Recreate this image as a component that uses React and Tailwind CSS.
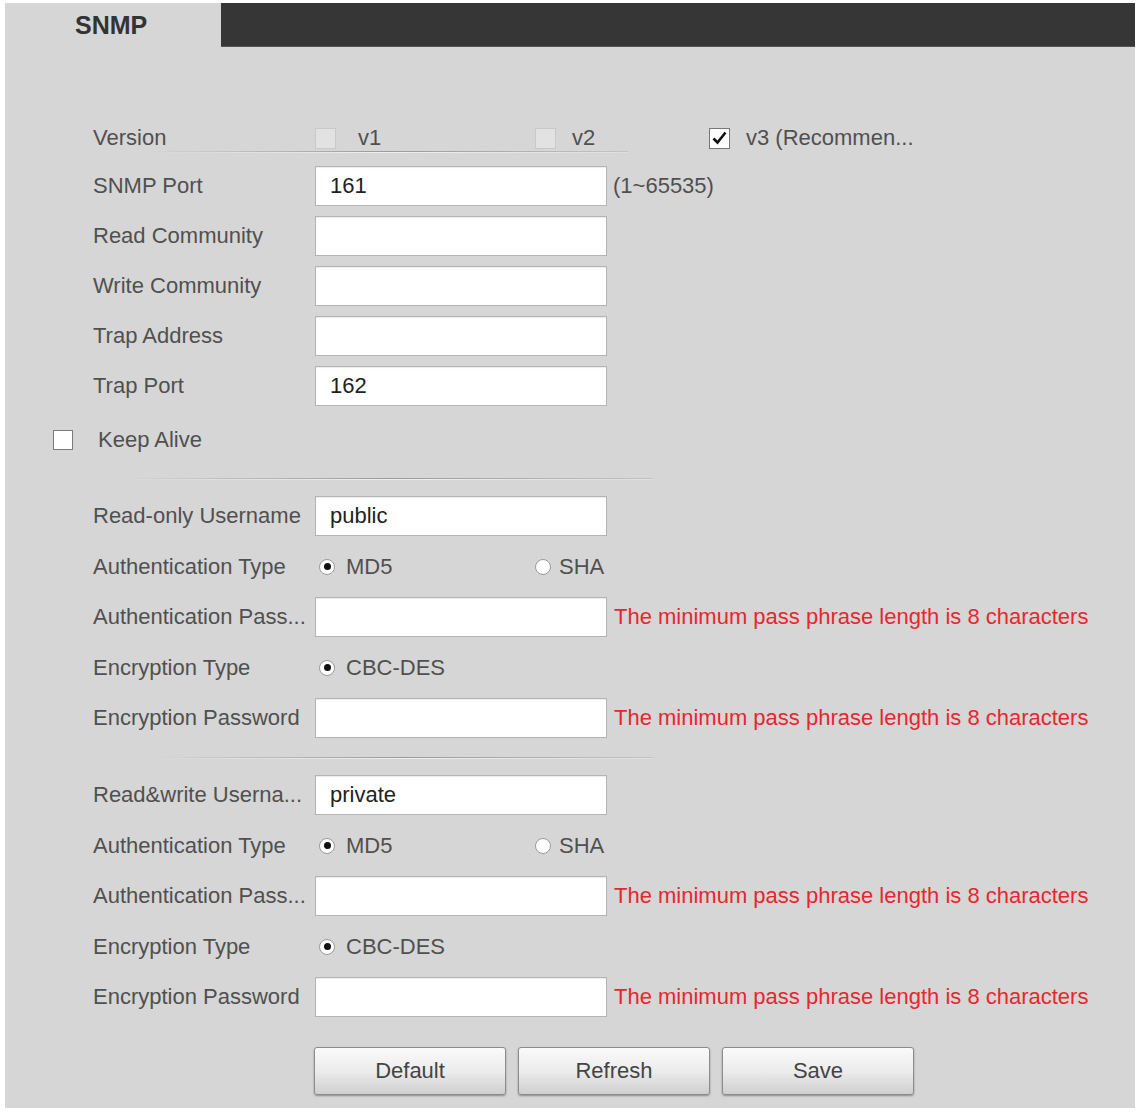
import React from "react";

const FONT = { fontFamily: '"Liberation Sans", Arial, sans-serif' };

function Sep({ ml = 40, w = 520 }) {
  return (
    <div className="flex flex-col" style={{ marginLeft: ml, width: w }}>
      <div className="h-px bg-gradient-to-r from-transparent via-[#9a9a9a] to-[#c4c4c4]" />
      <div className="h-px bg-gradient-to-r from-transparent via-[#efefef] to-[#dedede]" />
    </div>
  );
}

function Label({ children }) {
  return <div className="w-[222px] shrink-0 whitespace-nowrap text-[#505050]">{children}</div>;
}

function Input({ value }) {
  return (
    <div className="w-[292px] h-[40px] shrink-0 bg-white border border-[#b4b4b4] shadow-[inset_0_1px_1px_rgba(0,0,0,0.08)] flex items-center pl-[14px] text-[#222]">
      {value}
    </div>
  );
}

function Warn() {
  return (
    <div className="ml-[7px] whitespace-nowrap text-[#e8262f]">
      The minimum pass phrase length is 8 characters
    </div>
  );
}

function Radio({ on }) {
  return (
    <div className="w-[16px] h-[16px] rounded-full bg-white border border-[#9a9a9a] flex items-center justify-center shrink-0">
      {on && <div className="w-[7px] h-[7px] rounded-full bg-[#111]" />}
    </div>
  );
}

function Row({ children }) {
  return <div className="flex items-center h-[40px]">{children}</div>;
}

function Group({ user }) {
  return (
    <div className="flex flex-col gap-[10.5px]">
      <Row>
        <Label>{user[0]}</Label>
        <Input value={user[1]} />
      </Row>
      <Row>
        <Label>Authentication Type</Label>
        <div className="w-[220px] flex items-center pl-[4px]">
          <Radio on />
          <span className="ml-[11px] text-[#505050]">MD5</span>
        </div>
        <div className="flex items-center">
          <Radio />
          <span className="ml-[8px] text-[#505050]">SHA</span>
        </div>
      </Row>
      <Row>
        <Label>Authentication Pass...</Label>
        <Input value="" />
        <Warn />
      </Row>
      <Row>
        <Label>Encryption Type</Label>
        <div className="flex items-center pl-[4px]">
          <Radio on />
          <span className="ml-[11px] text-[#505050]">CBC-DES</span>
        </div>
      </Row>
      <Row>
        <Label>Encryption Password</Label>
        <Input value="" />
        <Warn />
      </Row>
    </div>
  );
}

function Btn({ children }) {
  return (
    <div className="w-[192px] h-[48px] rounded-[3px] border border-[#8c8c8c] bg-gradient-to-b from-[#fafafa] via-[#ececec] to-[#cfcfcf] shadow-[0_1px_2px_rgba(0,0,0,0.35)] flex items-center justify-center text-[#444]">
      {children}
    </div>
  );
}

export default function App() {
  return (
    <div
      className="w-[1137px] h-[1112px] bg-white pt-[3px] pb-[4px] pl-[5px] pr-[2px] text-[22px] leading-none"
      style={FONT}
    >
      <div className="h-full bg-[#d6d6d6] flex flex-col">
        <div className="flex h-[44px] shrink-0">
          <div className="w-[216px] flex items-center pl-[70px] text-[25px] font-bold text-[#333]">
            SNMP
          </div>
          <div className="flex-1 bg-[#363636] border-b border-[#555]" />
        </div>

        <div className="pl-[88px] flex flex-col">
          {/* Version */}
          <div className="flex items-center h-[24px] mt-[79px]">
            <Label>Version</Label>
            <div className="w-[220px] flex items-center">
              <div className="w-[21px] h-[21px] bg-[#e2e2e2] border border-[#c9c9c9]" />
              <span className="ml-[22px] text-[#505050]">v1</span>
            </div>
            <div className="w-[174px] flex items-center">
              <div className="w-[21px] h-[21px] bg-[#e2e2e2] border border-[#c9c9c9]" />
              <span className="ml-[16px] text-[#505050]">v2</span>
            </div>
            <div className="flex items-center">
              <div className="w-[21px] h-[21px] bg-white border border-[#777] flex items-center justify-center">
                <svg width="15" height="14" viewBox="0 0 15 14">
                  <path d="M1.5 7.5 L5.5 11.5 L13.5 1.5" fill="none" stroke="#111" strokeWidth="2.6" />
                </svg>
              </div>
              <span className="ml-[16px] text-[#505050]">v3 (Recommen...</span>
            </div>
          </div>

          <div className="mt-[1px]">
            <Sep ml={55} w={480} />
          </div>

          <div className="flex flex-col gap-[10px] mt-[13px]">
            <Row>
              <Label>SNMP Port</Label>
              <Input value="161" />
              <span className="ml-[6px] text-[#505050]">(1~65535)</span>
            </Row>
            <Row>
              <Label>Read Community</Label>
              <Input value="" />
            </Row>
            <Row>
              <Label>Write Community</Label>
              <Input value="" />
            </Row>
            <Row>
              <Label>Trap Address</Label>
              <Input value="" />
            </Row>
            <Row>
              <Label>Trap Port</Label>
              <Input value="162" />
            </Row>
          </div>

          {/* Keep Alive */}
          <div className="flex items-center h-[30px] mt-[19px] -ml-[40px]">
            <div className="w-[20px] h-[20px] bg-white border border-[#7a7a7a]" />
            <span className="ml-[25px] text-[#505050]">Keep Alive</span>
          </div>

          <div className="mt-[23px]">
            <Sep ml={30} w={530} />
          </div>

          <div className="mt-[16px]">
            <Group user={["Read-only Username", "public"]} />
          </div>

          <div className="mt-[19px]">
            <Sep ml={60} w={500} />
          </div>

          <div className="mt-[16px]">
            <Group user={["Read&write Userna...", "private"]} />
          </div>

          <div className="flex gap-[12px] mt-[30px] ml-[221px]">
            <Btn>Default</Btn>
            <Btn>Refresh</Btn>
            <Btn>Save</Btn>
          </div>
        </div>
      </div>
    </div>
  );
}
